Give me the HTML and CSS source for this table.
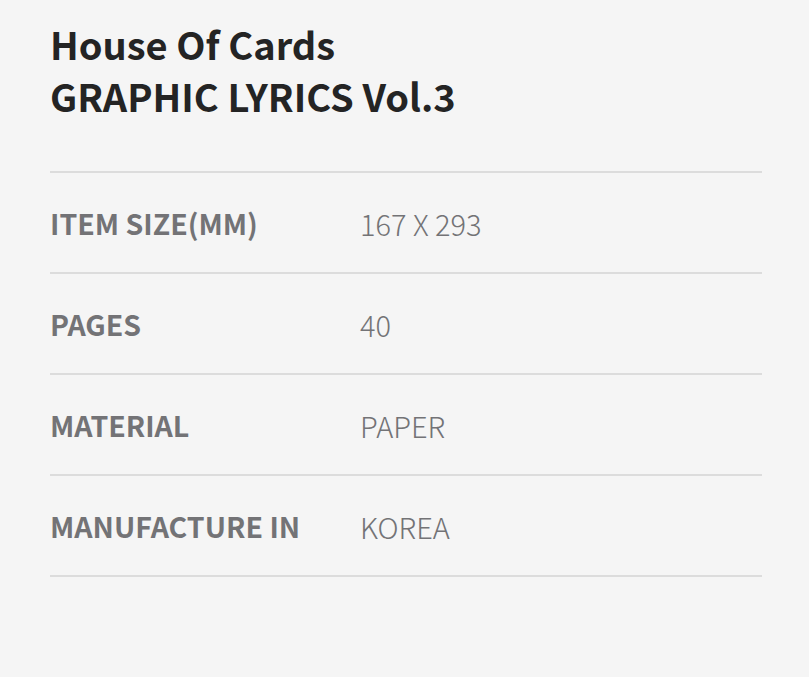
FILE: index.html
```html
<!DOCTYPE html>
<html lang="en">
<head>
<meta charset="utf-8">
<link rel="stylesheet" href="styles.css">
</head>
<body>
<div class="page">
  <h1 class="title">House Of Cards<br>GRAPHIC LYRICS Vol.3</h1>
  <div class="specs">
    <div class="row"><div class="label">ITEM SIZE(MM)</div><div class="value">167 X 293</div></div>
    <div class="row"><div class="label">PAGES</div><div class="value">40</div></div>
    <div class="row"><div class="label">MATERIAL</div><div class="value">PAPER</div></div>
    <div class="row"><div class="label">MANUFACTURE IN</div><div class="value">KOREA</div></div>
  </div>
</div>
</body>
</html>
```
FILE: styles.css
```css
html, body {
  margin: 0;
  padding: 0;
  background: #f5f5f5;
}
body {
  font-family: "Noto Sans CJK KR", "Noto Sans", sans-serif;
  width: 809px;
  height: 677px;
  overflow: hidden;
}
.page {
  padding: 18px 47px 0 50px;
}
.title {
  margin: 0;
  font-size: 38px;
  line-height: 52px;
  font-weight: 700;
  color: #242424;
  padding-bottom: 49px;
  border-bottom: 2px solid #dcdcdc;
}
.row {
  display: flex;
  align-items: center;
  height: 99px;
  border-bottom: 2px solid #dcdcdc;
}
.label {
  width: 310px;
  font-size: 28.5px;
  font-weight: 700;
  color: #737376;
}
.value {
  font-size: 29px;
  font-weight: 300;
  color: #737376;
}
```
